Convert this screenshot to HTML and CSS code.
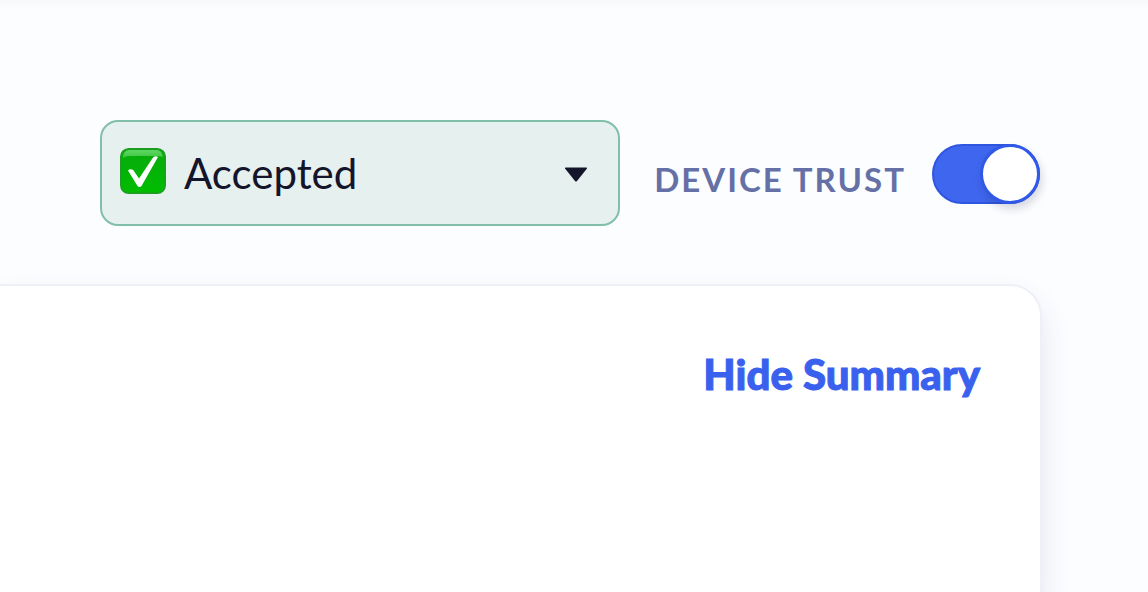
FILE: index.html
```html
<!DOCTYPE html>
<html lang="en">
<head>
<meta charset="utf-8">
<meta name="viewport" content="width=device-width, initial-scale=1">
<title>Device Trust</title>
<link rel="stylesheet" href="styles.css">
</head>
<body>
<main class="page">
  <div class="toolbar">
    <div class="status">
      <svg class="status-icon" viewBox="0 0 46 46" aria-hidden="true">
        <defs>
          <linearGradient id="gloss" x1="0" y1="0" x2="0" y2="1">
            <stop offset="0" stop-color="#5fd663"/>
            <stop offset="1" stop-color="#6fdc70" stop-opacity=".5"/>
          </linearGradient>
          <linearGradient id="face" x1="0" y1="0" x2="0" y2="1">
            <stop offset="0" stop-color="#08a90c"/>
            <stop offset="1" stop-color="#00bd00"/>
          </linearGradient>
        </defs>
        <rect x="0.75" y="0.75" width="44.5" height="44.5" rx="8" fill="url(#face)" stroke="#219a26" stroke-width="1.5"/>
        <path d="M9 2H37Q42 2.500 43 9Q41 8 36 8H10Q5 8 3 10Q3 2.500 9 2Z" fill="url(#gloss)"/>
        <path d="M8 22.500Q10 20.500 13 21.800L19 30.500L33 9.500Q35.500 7.500 38 9L21.500 38Q19.500 40 17.500 38Z" fill="#fff"/>
      </svg>
      <select class="status-select" aria-label="Status">
        <option selected>Accepted</option>
        <option>Pending</option>
        <option>Rejected</option>
      </select>
      <svg class="status-arrow" viewBox="0 0 24 15" aria-hidden="true">
        <path d="M1.500 .5H22.500Q23.500 .8 22.800 1.800L13 14Q12 15 11 14L1.200 1.800Q.5 .8 1.500 .5Z" fill="#14142b"/>
      </svg>
    </div>
    <label class="trust-label" for="trust">DEVICE TRUST</label>
    <input class="switch" id="trust" type="checkbox" role="switch" checked>
  </div>
  <section class="card">
    <button class="summary-toggle" type="button">Hide Summary</button>
  </section>
</main>
</body>
</html>
```
FILE: styles.css
```css
*,
*::before {
  box-sizing: border-box;
}

body {
  margin: 0;
  background: #fcfdff;
  color: #14142b;
  font-family: Lato, sans-serif;
}

.page {
  display: flex;
  flex-direction: column;
  gap: 58px;
  min-height: 100vh;
  padding: 120px 106px 0 0;
  overflow: hidden;
  background: linear-gradient(#f6f7f9, #f9fafc 4px, #fcfdff 10px);
}

.toolbar {
  display: flex;
  align-items: center;
  padding: 0 2px 0 100px;
}

.status {
  position: relative;
  flex: 1;
}

.status-select {
  display: block;
  width: 100%;
  height: 106px;
  padding: 0 60px 0 82px;
  border: 2px solid #82bfa9;
  border-radius: 18px;
  background: #e6f0ee;
  color: #14142b;
  font: 400 42px/52px Lato, sans-serif;
  appearance: none;
}

.status-icon,
.status-arrow {
  position: absolute;
  pointer-events: none;
}

.status-icon {
  top: 28px;
  left: 20px;
  width: 46px;
  height: 46px;
}

.status-arrow {
  top: 47px;
  right: 32px;
  width: 24px;
  height: 15px;
}

.trust-label {
  margin: 12px 26px 0 34px;
  color: #6570a6;
  font-size: 33px;
  font-weight: 700;
  line-height: 40px;
  letter-spacing: 2px;
  white-space: nowrap;
}

.switch {
  flex: none;
  width: 108px;
  height: 60px;
  margin: 2px 0 0;
  border: 2px solid #2f56e0;
  border-radius: 30px;
  background: #3f66ee;
  appearance: none;
}

.switch::before {
  content: "";
  display: block;
  width: 60px;
  height: 60px;
  margin: -2px 0 0 -2px;
  border: 3px solid #3159e8;
  border-radius: 50%;
  background: #fff;
  box-shadow: 2px 5px 8px rgba(20, 20, 43, 0.16);
}

.switch:checked::before {
  margin-left: 46px;
}

.card {
  display: flex;
  flex: 1;
  align-items: flex-start;
  justify-content: flex-end;
  padding: 62px 60px;
  border: 2px solid #eff0f7;
  border-width: 2px 2px 0 0;
  border-radius: 0 32px 0 0;
  background: #fff;
  box-shadow: 0 16px 30px rgba(50, 60, 130, 0.12);
}

.summary-toggle {
  padding: 0;
  border: 0;
  background: none;
  color: #3a60ee;
  font: 900 42px/52px Lato, sans-serif;
  -webkit-text-stroke: 1px #3a60ee;
}
```
